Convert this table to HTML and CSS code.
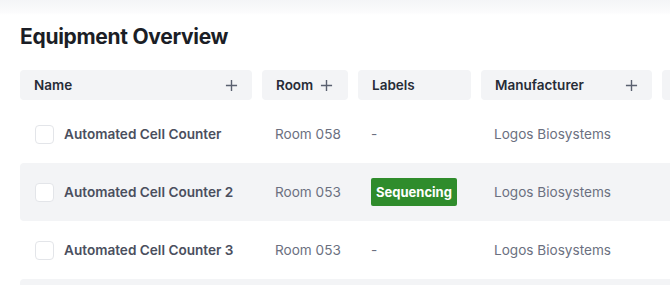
FILE: index.html
```html
<!DOCTYPE html>
<html>
<head>
<meta charset="utf-8">
<link rel="stylesheet" href="styles.css">
</head>
<body>
<div class="topbar"></div>
<main class="page">
  <h1 class="title">Equipment Overview</h1>
  <div class="table">
    <div class="row head">
      <div class="hcell spread">Name <svg class="plus" viewBox="0 0 14 14"><path d="M7 1v12M1 7h12"/></svg></div>
      <div class="hcell">Room <svg class="plus" viewBox="0 0 14 14"><path d="M7 1v12M1 7h12"/></svg></div>
      <div class="hcell">Labels</div>
      <div class="hcell spread">Manufacturer <svg class="plus" viewBox="0 0 14 14"><path d="M7 1v12M1 7h12"/></svg></div>
      <div class="hcell"></div>
    </div>
    <div class="row">
      <div class="cell name"><span class="check"></span>Automated Cell Counter</div>
      <div class="cell">Room 058</div>
      <div class="cell">-</div>
      <div class="cell">Logos Biosystems</div>
      <div class="cell"></div>
    </div>
    <div class="row alt">
      <div class="cell name"><span class="check"></span>Automated Cell Counter 2</div>
      <div class="cell">Room 053</div>
      <div class="cell"><span class="badge">Sequencing</span></div>
      <div class="cell">Logos Biosystems</div>
      <div class="cell"></div>
    </div>
    <div class="row">
      <div class="cell name"><span class="check"></span>Automated Cell Counter 3</div>
      <div class="cell">Room 053</div>
      <div class="cell">-</div>
      <div class="cell">Logos Biosystems</div>
      <div class="cell"></div>
    </div>
    <div class="row alt"></div>
  </div>
</main>
</body>
</html>
```

FILE: styles.css
```css
html, body {
  margin: 0;
  padding: 0;
  background: #ffffff;
  overflow: hidden;
}
body {
  font-family: Inter, "Open Sans", sans-serif;
  color: #4b5060;
}
.topbar {
  height: 15px;
  background: linear-gradient(to bottom, #f4f5f7, #fbfbfc 80%, #ffffff);
}
.page {
  padding-left: 20px;
}
.title {
  margin: 8px 0 0 0;
  font-size: 21px;
  line-height: 28px;
  font-weight: 700;
  color: #1b1e26;
  letter-spacing: -0.3px;
}
.table {
  margin-top: 19px;
  display: flex;
  flex-direction: column;
}
.row {
  display: grid;
  grid-template-columns: 232px 86px 113px 171px 1fr;
  column-gap: 10px;
  height: 58px;
  align-items: center;
  border-radius: 4px 0 0 4px;
}
.row.head {
  height: 30px;
  margin-bottom: 5px;
  align-items: stretch;
}
.row.alt {
  background: #f3f4f6;
}
.hcell {
  background: #f3f4f6;
  border-radius: 4px;
  display: flex;
  align-items: center;
  gap: 7px;
  padding: 0 14px;
  font-size: 13.5px;
  font-weight: 600;
  color: #272c37;
}
.hcell.spread {
  justify-content: space-between;
}
.plus {
  width: 13px;
  height: 13px;
  flex: none;
  fill: none;
  stroke: #5a6070;
  stroke-width: 1.5;
}
.cell {
  padding-left: 13px;
  font-size: 13.6px;
  color: #6b7080;
  display: flex;
  align-items: center;
}
.cell.name {
  padding-left: 15px;
  font-weight: 600;
  color: #4a4f5e;
  gap: 10px;
}
.check {
  width: 17px;
  height: 17px;
  border: 1.5px solid #e3e5e9;
  border-radius: 4px;
  background: #ffffff;
  flex: none;
}
.badge {
  display: inline-flex;
  align-items: center;
  justify-content: center;
  height: 28px;
  width: 86px;
  background: #2f8c2c;
  color: #ffffff;
  font-weight: 700;
  font-size: 13px;
  border-radius: 2px;
  box-sizing: border-box;
}
```
